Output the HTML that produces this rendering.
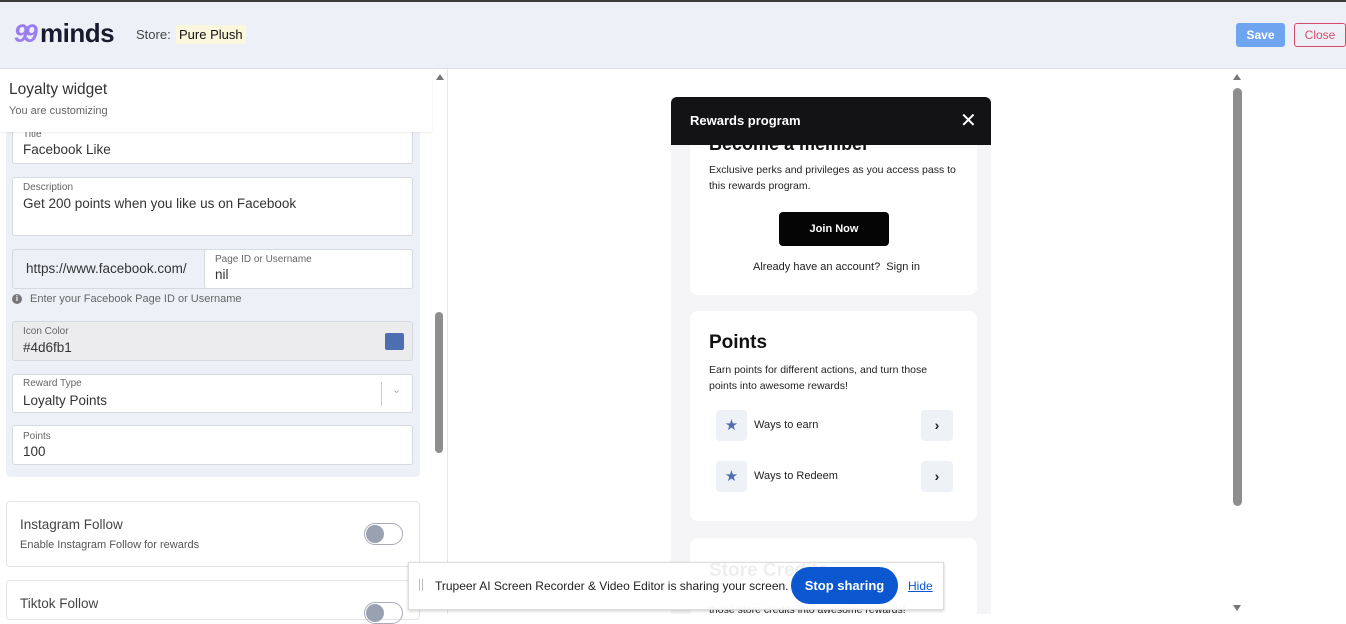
<!DOCTYPE html>
<html><head><meta charset="utf-8"><style>
*{box-sizing:border-box;margin:0;padding:0}
body{width:1346px;height:614px;overflow:hidden;position:relative;background:#fff;font-family:"Liberation Sans",sans-serif;color:#222}
.a{position:absolute}
.fld{position:absolute;left:12px;width:401px;background:#fff;border:1px solid #d6d9df;border-radius:3px}
.lbl{position:absolute;left:10px;font-size:10px;color:#666}
.val{position:absolute;left:10px;font-size:13.5px;color:#333}
</style></head><body>
<div class="a" style="left:0;top:0;width:1346px;height:2px;background:#3a3a3a"></div>
<div class="a" style="left:0;top:2px;width:1346px;height:67px;background:#edf0f6;border-bottom:1px solid #d9dde4"></div>
<div class="a" style="left:14px;top:20px;font-size:25px;font-weight:bold;color:#9b7cf2;letter-spacing:-4px;font-style:italic">99</div>
<div class="a" style="left:40px;top:18px;font-size:26px;font-weight:bold;color:#1a1a2e;letter-spacing:-0.5px">minds</div>
<div class="a" style="left:136px;top:27px;font-size:13px;color:#444">Store:</div>
<div class="a" style="left:176px;top:25px;padding:2px 3px;font-size:13px;background:#fbf7dc;color:#111">Pure Plush</div>
<div class="a" style="left:1236px;top:23px;width:49px;height:24px;background:#6fa4ef;border-radius:3px;color:#fff;font-size:12px;font-weight:bold;text-align:center;line-height:24px">Save</div>
<div class="a" style="left:1294px;top:23px;width:52px;height:24px;border:1px solid #d84a6a;border-radius:3px;color:#d84a6a;font-size:12px;text-align:center;line-height:22px">Close</div>

<div class="a" style="left:447px;top:69px;width:1px;height:545px;background:#e6e6e6"></div>
<div class="a" style="left:436px;top:74px;width:0;height:0;border-left:4px solid transparent;border-right:4px solid transparent;border-bottom:6px solid #777"></div>
<div class="a" style="left:435px;top:312px;width:8px;height:141px;background:#8e8e8e;border-radius:4px"></div>

<div class="a" style="left:6px;top:131px;width:414px;height:346px;background:#edf0f6;border-radius:4px"></div>
<div class="fld" style="top:126px;height:38px"><div class="lbl" style="top:2px">Title</div><div class="val" style="top:15px">Facebook Like</div></div>
<div class="a" style="left:0;top:69px;width:432px;height:63px;background:#fff;box-shadow:0 1px 2px rgba(0,0,0,.08)"></div>
<div class="a" style="left:9px;top:81px;font-size:15.5px;color:#333">Loyalty widget</div>
<div class="a" style="left:9px;top:105px;font-size:11px;color:#666">You are customizing</div>

<div class="fld" style="top:177px;height:59px"><div class="lbl" style="top:4px">Description</div><div class="val" style="top:18px">Get 200 points when you like us on Facebook</div></div>
<div class="fld" style="top:249px;height:40px;background:#edf0f6"><div class="val" style="left:13px;top:11px">https://www.facebook.com/</div></div>
<div class="a" style="left:204px;top:249px;width:209px;height:40px;background:#fff;border:1px solid #d6d9df;border-radius:3px"><div class="lbl" style="top:4px">Page ID or Username</div><div class="val" style="top:17px">nil</div></div>
<div class="a" style="left:12px;top:294px;width:10px;height:10px;border-radius:50%;background:#777;color:#fff;font-size:8px;text-align:center;line-height:10px;font-weight:bold">i</div>
<div class="a" style="left:30px;top:293px;font-size:11px;color:#666">Enter your Facebook Page ID or Username</div>
<div class="fld" style="top:321px;height:40px;background:#ececef"><div class="lbl" style="top:4px">Icon Color</div><div class="val" style="top:18px">#4d6fb1</div><div class="a" style="left:372px;top:11px;width:19px;height:17px;background:#4d6fb1;border-radius:2px"></div></div>
<div class="fld" style="top:374px;height:39px"><div class="lbl" style="top:3px">Reward Type</div><div class="val" style="top:18px">Loyalty Points</div><div class="a" style="left:368px;top:7px;width:1px;height:24px;background:#ccc"></div><div class="a" style="left:379px;top:8px;font-size:11px;color:#aaa">⌄</div></div>
<div class="fld" style="top:425px;height:40px"><div class="lbl" style="top:5px">Points</div><div class="val" style="top:18px">100</div></div>

<div class="a" style="left:6px;top:501px;width:414px;height:66px;border:1px solid #e2e4ea;border-radius:4px;background:#fff"></div>
<div class="a" style="left:20px;top:517px;font-size:13.5px;color:#444">Instagram Follow</div>
<div class="a" style="left:20px;top:539px;font-size:11px;color:#555">Enable Instagram Follow for rewards</div>
<div class="a" style="left:364px;top:523px;width:39px;height:22px;border:1px solid #aab;border-radius:11px"><div style="position:absolute;left:1px;top:1px;width:18px;height:18px;border-radius:50%;background:#9aa2b1"></div></div>
<div class="a" style="left:6px;top:580px;width:414px;height:40px;border:1px solid #e2e4ea;border-radius:4px;background:#fff"></div>
<div class="a" style="left:20px;top:596px;font-size:13.5px;color:#444">Tiktok Follow</div>
<div class="a" style="left:364px;top:602px;width:39px;height:22px;border:1px solid #aab;border-radius:11px"><div style="position:absolute;left:1px;top:1px;width:18px;height:18px;border-radius:50%;background:#9aa2b1"></div></div>

<div class="a" style="left:671px;top:97px;width:320px;height:517px;background:#f5f5f7"></div>
<div class="a" style="left:690px;top:130px;width:287px;height:165px;background:#fff;border-radius:8px"></div>
<div class="a" style="left:709px;top:134px;font-size:18px;font-weight:bold;color:#111">Become a member</div>
<div class="a" style="left:671px;top:97px;width:320px;height:48px;background:#131316;border-radius:6px 6px 0 0"></div>
<div class="a" style="left:690px;top:113px;font-size:13px;font-weight:bold;color:#fff">Rewards program</div>
<div class="a" style="left:960px;top:108px;font-size:20px;color:#fff">✕</div>
<div class="a" style="left:709px;top:162px;width:255px;font-size:10.5px;line-height:16px;color:#222">Exclusive perks and privileges as you access pass to this rewards program.</div>
<div class="a" style="left:779px;top:212px;width:110px;height:34px;background:#050505;border-radius:4px;color:#fff;font-size:11px;font-weight:bold;text-align:center;line-height:34px">Join Now</div>
<div class="a" style="left:753px;top:261px;font-size:11px;color:#222">Already have an account?&nbsp; Sign in</div>

<div class="a" style="left:690px;top:311px;width:287px;height:210px;background:#fff;border-radius:8px"></div>
<div class="a" style="left:709px;top:332px;font-size:19px;font-weight:bold;color:#111">Points</div>
<div class="a" style="left:709px;top:362px;width:240px;font-size:10.5px;line-height:16px;color:#222">Earn points for different actions, and turn those points into awesome rewards!</div>
<div class="a" style="left:716px;top:410px;width:31px;height:31px;background:#eef1f6;border-radius:4px;color:#4d6fb1;text-align:center;line-height:31px;font-size:15px">★</div>
<div class="a" style="left:754px;top:419px;font-size:11px">Ways to earn</div>
<div class="a" style="left:921px;top:410px;width:32px;height:31px;background:#eef1f6;border-radius:4px;text-align:center;line-height:30px;font-size:14px;font-weight:bold">›</div>
<div class="a" style="left:716px;top:461px;width:31px;height:31px;background:#eef1f6;border-radius:4px;color:#4d6fb1;text-align:center;line-height:31px;font-size:15px">★</div>
<div class="a" style="left:754px;top:470px;font-size:11px">Ways to Redeem</div>
<div class="a" style="left:921px;top:461px;width:32px;height:31px;background:#eef1f6;border-radius:4px;text-align:center;line-height:30px;font-size:14px;font-weight:bold">›</div>
<div class="a" style="left:690px;top:538px;width:287px;height:80px;background:#fff;border-radius:8px"></div>
<div class="a" style="left:709px;top:560px;font-size:19px;font-weight:bold;color:#111">Store Credits</div>
<div class="a" style="left:709px;top:604px;font-size:10.5px;color:#222">those store credits into awesome rewards!</div>

<div class="a" style="left:1233px;top:74px;width:0;height:0;border-left:4px solid transparent;border-right:4px solid transparent;border-bottom:6px solid #777"></div>
<div class="a" style="left:1233px;top:88px;width:9px;height:418px;background:#8e8e8e;border-radius:5px"></div>
<div class="a" style="left:1233px;top:605px;width:0;height:0;border-left:4px solid transparent;border-right:4px solid transparent;border-top:6px solid #777"></div>

<div class="a" style="left:408px;top:562px;width:536px;height:48px;background:rgba(255,255,255,.93);border:1px solid #ddd;box-shadow:0 1px 3px rgba(0,0,0,.2)"></div>
<div class="a" style="left:419px;top:579px;height:12px;border-left:1px solid #bbb;border-right:1px solid #bbb;width:4px"></div>
<div class="a" style="left:435px;top:579px;font-size:12px;color:#222">Trupeer AI Screen Recorder &amp; Video Editor is sharing your screen.</div>
<div class="a" style="left:791px;top:567px;width:107px;height:37px;background:#0b57d0;border-radius:19px;color:#fff;font-size:13px;font-weight:bold;text-align:center;line-height:37px">Stop sharing</div>
<div class="a" style="left:908px;top:579px;font-size:12px;color:#0b57d0;text-decoration:underline">Hide</div>
</body></html>
